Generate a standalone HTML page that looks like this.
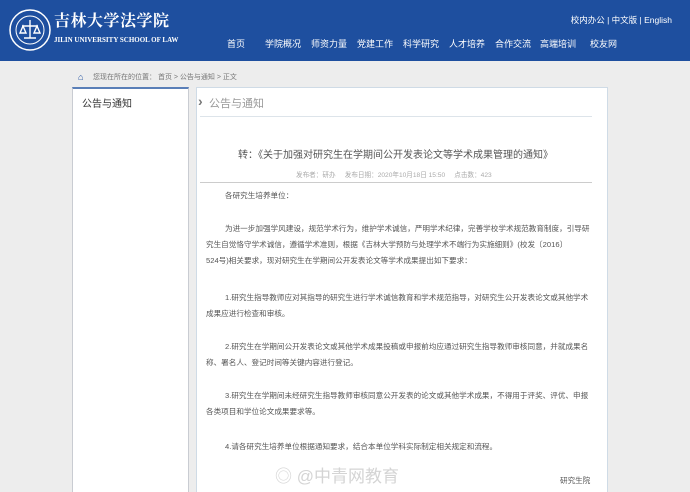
<!DOCTYPE html>
<html><head><meta charset="utf-8"><style>
*{margin:0;padding:0;box-sizing:border-box}
html,body{width:690px;height:492px;overflow:hidden}
body{background:#ededed;font-family:"Liberation Sans","Noto Sans CJK SC",sans-serif;position:relative}
.hd{position:absolute;left:0;top:0;width:690px;height:61px;background:#1e4f9f}
.t{position:absolute;white-space:nowrap}
.nav{color:#fff;font-size:9px;top:37px}
.p{position:absolute;left:206px;width:386px;font-size:7.6px;color:#555;line-height:16px}
</style></head><body>
<div class="hd">
<svg style="position:absolute;left:9px;top:9px" width="42" height="42" viewBox="0 0 42 42"><circle cx="21" cy="21" r="20" fill="none" stroke="#fff" stroke-width="1.5"/><circle cx="21" cy="21" r="14" fill="none" stroke="#fff" stroke-width="1"/><path d="M21 11v18M13 17h16M11 24l3-7 3 7zM25 24l3-7 3 7zM15 29h12" stroke="#fff" stroke-width="1.4" fill="none"/></svg>
<div class="t" style="left:54px;top:8px;color:#fff;font-family:'Noto Serif CJK SC',serif;font-size:16px;font-weight:bold;letter-spacing:0.5px">吉林大学法学院</div>
<div class="t" style="left:54px;top:36px;color:#fff;font-family:'Liberation Serif',serif;font-size:7px;font-weight:bold">JILIN UNIVERSITY SCHOOL OF LAW</div>
<div class="t" style="right:18px;top:14px;color:#fff;font-size:8.5px">校内办公 | 中文版 | English</div>
<div class="t nav" style="left:227px">首页</div>
<div class="t nav" style="left:265px">学院概况</div>
<div class="t nav" style="left:311px">师资力量</div>
<div class="t nav" style="left:357px">党建工作</div>
<div class="t nav" style="left:403px">科学研究</div>
<div class="t nav" style="left:449px">人才培养</div>
<div class="t nav" style="left:495px">合作交流</div>
<div class="t nav" style="left:540px">高端培训</div>
<div class="t nav" style="left:590px">校友网</div>
</div>
<div class="t" style="left:78px;top:72px;color:#1e4f9f;font-size:9px">⌂</div>
<div class="t" style="left:93px;top:72px;color:#777;font-size:7px">您现在所在的位置： 首页 &gt; 公告与通知 &gt; 正文</div>
<div style="position:absolute;left:72px;top:87px;width:117px;height:410px;background:#fff;border:1px solid #c9ccd2;border-top:2px solid #5a7fb8"></div>
<div class="t" style="left:82px;top:95px;color:#333;font-size:10px">公告与通知</div>
<div style="position:absolute;left:196px;top:87px;width:412px;height:410px;background:#fff;border:1px solid #cfdbe6"></div>
<div class="t" style="left:198px;top:93px;color:#777;font-size:14px;font-weight:bold">›</div>
<div class="t" style="left:209px;top:95px;color:#999;font-size:11px">公告与通知</div>
<div style="position:absolute;left:200px;top:116px;width:392px;height:1px;background:#dde4ea"></div>
<div class="t" style="left:238px;top:146px;color:#555;font-size:10px">转：《关于加强对研究生在学期间公开发表论文等学术成果管理的通知》</div>
<div class="t" style="left:296px;top:169px;color:#aaa;font-size:6.6px">发布者：研办&nbsp;&nbsp;&nbsp;&nbsp;&nbsp;发布日期：2020年10月18日 15:50&nbsp;&nbsp;&nbsp;&nbsp;&nbsp;点击数：423</div>
<div style="position:absolute;left:200px;top:182px;width:392px;height:1px;background:#ccc"></div>
<div class="p" style="top:188px;text-indent:19px">各研究生培养单位：</div>
<div class="p" style="top:221px;text-indent:19px">为进一步加强学风建设，规范学术行为，维护学术诚信，严明学术纪律，完善学校学术规范教育制度，引导研究生自觉恪守学术诚信，遵循学术准则，根据《吉林大学预防与处理学术不端行为实施细则》(校发〔2016〕<br>524号)相关要求，现对研究生在学期间公开发表论文等学术成果提出如下要求：</div>
<div class="p" style="top:290px;text-indent:19px">1.研究生指导教师应对其指导的研究生进行学术诚信教育和学术规范指导，对研究生公开发表论文或其他学术成果应进行检查和审核。</div>
<div class="p" style="top:339px;text-indent:19px">2.研究生在学期间公开发表论文或其他学术成果投稿或申报前均应通过研究生指导教师审核同意，并就成果名称、署名人、登记时间等关键内容进行登记。</div>
<div class="p" style="top:388px;text-indent:19px">3.研究生在学期间未经研究生指导教师审核同意公开发表的论文或其他学术成果，不得用于评奖、评优、申报各类项目和学位论文成果要求等。</div>
<div class="p" style="top:439px;text-indent:19px">4.请各研究生培养单位根据通知要求，结合本单位学科实际制定相关规定和流程。</div>
<div class="t" style="left:275px;top:462px;color:#d4d4d4;font-size:17px">◎ @中青网教育</div>
<div class="t" style="left:560px;top:475px;color:#555;font-size:7.6px">研究生院</div>
</body></html>
